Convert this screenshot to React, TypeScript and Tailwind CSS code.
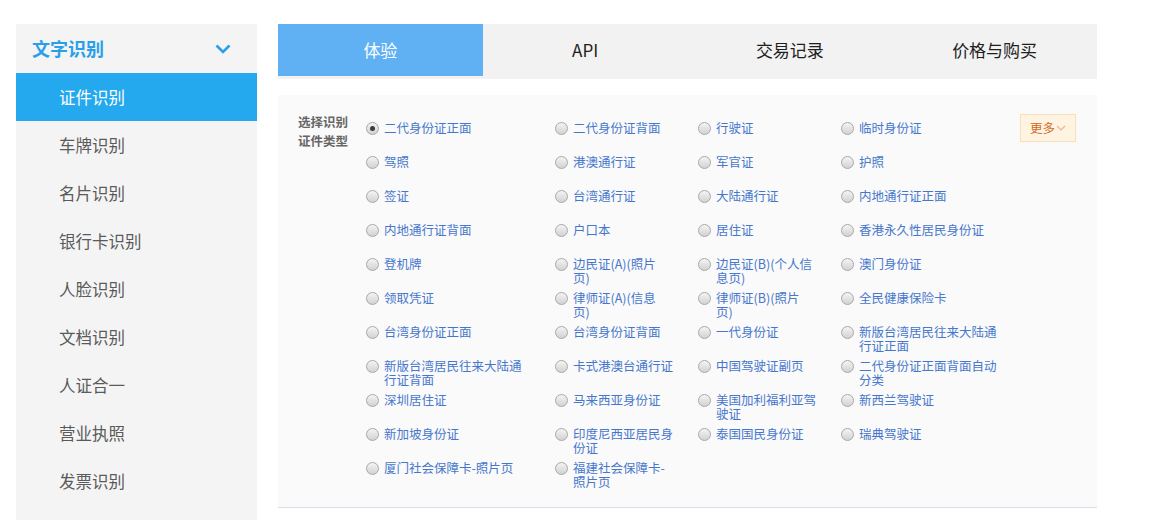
const menu = ["证件识别", "车牌识别", "名片识别", "银行卡识别", "人脸识别", "文档识别", "人证合一", "营业执照", "发票识别"];
const tabs = ["体验", "API", "交易记录", "价格与购买"];

// each entry: lines of the label as they wrap in the reference
const types: string[][] = [
  ["二代身份证正面"], ["二代身份证背面"], ["行驶证"], ["临时身份证"],
  ["驾照"], ["港澳通行证"], ["军官证"], ["护照"],
  ["签证"], ["台湾通行证"], ["大陆通行证"], ["内地通行证正面"],
  ["内地通行证背面"], ["户口本"], ["居住证"], ["香港永久性居民身份证"],
  ["登机牌"], ["边民证(A)(照片", "页)"], ["边民证(B)(个人信", "息页)"], ["澳门身份证"],
  ["领取凭证"], ["律师证(A)(信息", "页)"], ["律师证(B)(照片", "页)"], ["全民健康保险卡"],
  ["台湾身份证正面"], ["台湾身份证背面"], ["一代身份证"], ["新版台湾居民往来大陆通", "行证正面"],
  ["新版台湾居民往来大陆通", "行证背面"], ["卡式港澳台通行证"], ["中国驾驶证副页"], ["二代身份证正面背面自动", "分类"],
  ["深圳居住证"], ["马来西亚身份证"], ["美国加利福利亚驾", "驶证"], ["新西兰驾驶证"],
  ["新加坡身份证"], ["印度尼西亚居民身", "份证"], ["泰国国民身份证"], ["瑞典驾驶证"],
  ["厦门社会保障卡-照片页"], ["福建社会保障卡-", "照片页"],
];

const Radio = ({ checked }: { checked?: boolean }) => (
  <span className="mt-[1px] flex h-[13px] w-[13px] shrink-0 items-center justify-center rounded-full border border-[#a8a8a8] bg-gradient-to-b from-[#f4f4f4] to-[#d2d2d2]">
    {checked && <span className="h-[5px] w-[5px] rounded-full bg-[#3c3c3c]" />}
  </span>
);

export default function App() {
  return (
    <div className="flex min-h-[520px] gap-[21px] bg-white pl-[16px] pt-[24px] font-['Noto_Sans_CJK_SC',sans-serif]">
      <aside className="w-[241px] shrink-0 bg-[#f4f4f4] pb-[20px]">
        <div className="flex h-[49px] items-center justify-between pl-[16px] pr-[26px]">
          <span className="text-[18px] font-bold text-[#2a9fe9]">文字识别</span>
          <svg width="16" height="10" viewBox="0 0 16 10" fill="none">
            <path d="M1.5 1.5 L8 8 L14.5 1.5" stroke="#2a9fe9" strokeWidth="2.6" />
          </svg>
        </div>
        {menu.map((m, i) => (
          <div
            key={m}
            className={`flex h-[48px] items-center pl-[43px] text-[16.5px] ${
              i === 0 ? "bg-[#24a9ee] text-white" : "text-[#5a5a5a]"
            }`}
          >
            {m}
          </div>
        ))}
      </aside>

      <main className="w-[819px]">
        <div className="grid h-[55px] grid-cols-4 bg-[#f2f2f2] pb-[3px]">
          {tabs.map((t, i) => (
            <div
              key={t}
              className={`flex items-center justify-center text-[17px] ${
                i === 0 ? "bg-[#5fb1f4] text-white" : "text-[#1e1e1e]"
              }`}
            >
              {t}
            </div>
          ))}
        </div>

        <section className="mt-[16px] flex border-b border-[#d6deef] bg-[#fafafa] pb-[18px] pl-[20px] pt-[20px]">
          <div className="mt-[-3px] w-[68px] shrink-0 text-[12.5px] font-bold leading-[19px] text-[#666]">
            选择识别
            <br />
            证件类型
          </div>
          <div className="grid grid-cols-[189px_143px_143px_179px] auto-rows-[34px]">
            {types.map((lines, i) => (
              <label key={i} className="flex items-start gap-[5px] pt-[6px]">
                <Radio checked={i === 0} />
                <span className="text-[12.5px] leading-[14px] text-[#4677cc]">
                  {lines.map((l, j) => (
                    <span key={j} className="block whitespace-nowrap">
                      {l}
                    </span>
                  ))}
                </span>
              </label>
            ))}
          </div>
          <div className="mt-[-1px] flex h-[28px] w-[56px] shrink-0 items-center justify-center gap-[1px] self-start border border-[#f9dfb9] bg-[#fff3e1] text-[12.5px] text-[#d2691e]">
            更多
            <svg width="10" height="7" viewBox="0 0 10 7" fill="none">
              <path d="M1 1 L5 5 L9 1" stroke="#f0b48a" strokeWidth="1.2" />
            </svg>
          </div>
        </section>
      </main>
    </div>
  );
}
